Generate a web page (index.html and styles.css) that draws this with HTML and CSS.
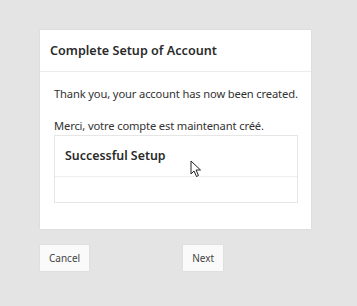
FILE: index.html
```html
<!DOCTYPE html>
<html>
<head>
<meta charset="utf-8">
<link rel="stylesheet" href="styles.css">
</head>
<body>
<div class="page">
  <div class="card">
    <div class="card-header">Complete Setup of Account</div>
    <div class="card-body">
      <p class="line">Thank you, your account has now been created.</p>
      <p class="line fr">Merci, votre compte est maintenant créé.</p>
      <div class="panel">
        <div class="panel-head">Successful Setup</div>
        <div class="panel-body"></div>
      </div>
    </div>
  </div>
  <div class="actions">
    <button class="btn">Cancel</button>
    <button class="btn">Next</button>
  </div>
</div>
<svg class="cursor" width="12" height="18" viewBox="0 0 12 18"><path d="M1 1 L1 14 L4 11 L6.5 16.5 L8.5 15.5 L6 10 L10.5 10 Z" fill="#fff" stroke="#222" stroke-width="1" stroke-linejoin="round"/></svg>
</body>
</html>
```
FILE: styles.css
```css
html, body { margin: 0; padding: 0; }
body {
  background: #e4e4e4;
  font-family: "Noto Sans", "Open Sans", sans-serif;
  color: #333;
  width: 357px;
  height: 306px;
  overflow: hidden;
  position: relative;
}
.page { padding: 30px 0 0 40px; }
.card {
  width: 271px;
  height: 199px;
  background: #fff;
  box-shadow: 0 0 2px rgba(0,0,0,0.08);
  box-sizing: border-box;
}
.card-header {
  height: 41px;
  border-bottom: 1px solid #ececec;
  padding-left: 10px;
  font-size: 12.6px;
  font-weight: 600;
  line-height: 41px;
  color: #2b2b2b;
}
.card-body { padding: 13px 13px 0 14px; }
.line {
  margin: 0;
  font-size: 11.2px;
  letter-spacing: -0.15px;
  line-height: 17px;
  color: #333;
  white-space: nowrap;
}
.fr { margin-top: 15px; }
.panel {
  margin-top: 1px;
  border: 1px solid #e6e6e6;
  height: 68px;
  box-sizing: border-box;
}
.panel-head {
  height: 40px;
  border-bottom: 1px solid #eeeeee;
  padding-left: 10px;
  line-height: 40px;
  font-size: 12.4px;
  font-weight: 600;
  color: #2b2b2b;
}
.actions {
  display: flex;
  gap: 94px;
  margin-top: 16px;
}
.btn {
  height: 26px;
  padding: 0 9px;
  border: none;
  background: #fafafa;
  font-family: "Noto Sans", "Open Sans", sans-serif;
  font-size: 10px;
  color: #444;
  box-shadow: 0 0 1px rgba(0,0,0,0.12);
}
.cursor { position: absolute; left: 190px; top: 160px; }
```
